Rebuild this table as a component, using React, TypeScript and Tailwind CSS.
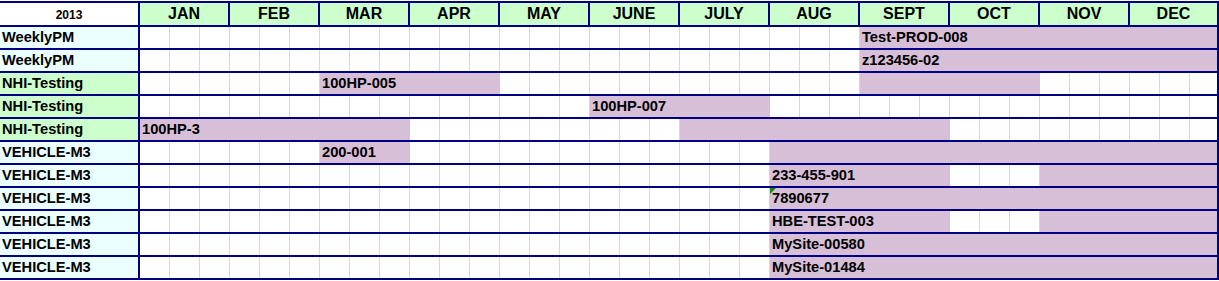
import React from "react";

type Bar = { start: number; end: number; text?: string };
type Row = { label: string; tone: "cyan" | "green"; bars: Bar[]; flag?: boolean };

const months = ["JAN", "FEB", "MAR", "APR", "MAY", "JUNE", "JULY", "AUG", "SEPT", "OCT", "NOV", "DEC"];

// bar start/end are third-of-month cell indexes (0..36)
const rows: Row[] = [
	{ label: "WeeklyPM", tone: "cyan", bars: [{ start: 24, end: 36, text: "Test-PROD-008" }] },
	{ label: "WeeklyPM", tone: "cyan", bars: [{ start: 24, end: 36, text: "z123456-02" }] },
	{ label: "NHI-Testing", tone: "green", bars: [{ start: 6, end: 12, text: "100HP-005" }, { start: 24, end: 30 }] },
	{ label: "NHI-Testing", tone: "cyan", bars: [{ start: 15, end: 21, text: "100HP-007" }] },
	{ label: "NHI-Testing", tone: "green", bars: [{ start: 0, end: 9, text: "100HP-3" }, { start: 18, end: 27 }] },
	{ label: "VEHICLE-M3", tone: "cyan", bars: [{ start: 6, end: 9, text: "200-001" }, { start: 21, end: 36 }] },
	{ label: "VEHICLE-M3", tone: "cyan", bars: [{ start: 21, end: 27, text: "233-455-901" }, { start: 30, end: 36 }] },
	{ label: "VEHICLE-M3", tone: "cyan", bars: [{ start: 21, end: 36, text: "7890677" }], flag: true },
	{ label: "VEHICLE-M3", tone: "cyan", bars: [{ start: 21, end: 27, text: "HBE-TEST-003" }, { start: 30, end: 36 }] },
	{ label: "VEHICLE-M3", tone: "cyan", bars: [{ start: 21, end: 36, text: "MySite-00580" }] },
	{ label: "VEHICLE-M3", tone: "cyan", bars: [{ start: 21, end: 36, text: "MySite-01484" }] },
];

// the 4th row label is green in the sheet too
rows[3].tone = "green";

function Cells({ row }: { row: Row }) {
	const cells = [];
	for (let i = 0; i < 36; i++) {
		const bar = row.bars.find((b) => i >= b.start && i < b.end);
		const first = bar && bar.start === i;
		cells.push(
			<div
				key={i}
				className={
					bar
						? "relative w-[30px] shrink-0 h-full bg-[#d8bfd8]"
						: "relative w-[30px] shrink-0 h-full bg-white border-r border-[#d0d7e5]"
				}
			>
				{first && row.flag && (
					<span className="absolute top-0 left-0 w-0 h-0 border-t-[6px] border-r-[6px] border-t-[#168a16] border-r-transparent z-20" />
				)}
				{first && bar?.text && (
					<span className="relative z-10 block pl-[2px] whitespace-nowrap leading-[21px]">{bar.text}</span>
				)}
			</div>
		);
	}
	return <div className="flex flex-1 overflow-hidden h-full">{cells}</div>;
}

export default function App() {
	return (
		<div
			className="w-[1219px] h-[281px] bg-white pt-px overflow-hidden text-black font-bold"
			style={{ fontFamily: '"Liberation Sans", Arial, sans-serif' }}
		>
			<div className="border-t-2 border-r-2 border-[#000080]">
				{/* header */}
				<div className="flex h-[24px] border-b-2 border-[#000080]">
					<div className="w-[140px] shrink-0 border-r-2 border-[#000080] bg-white text-[12px] leading-[22px] text-center pt-px">
						2013
					</div>
					<div className="flex flex-1 overflow-hidden bg-[#ccffcc]">
						{months.map((m, i) => (
							<div
								key={m}
								className={
									i < 11
										? "w-[90px] shrink-0 border-r-2 border-[#000080] text-[16px] leading-[22px] text-center"
										: "flex-1 text-[16px] leading-[22px] text-center"
								}
							>
								{m}
							</div>
						))}
					</div>
				</div>
				{/* rows */}
				{rows.map((row, idx) => (
					<div key={idx} className="flex h-[23px] border-b-2 border-[#000080] text-[14.67px]">
						<div
							className={
								row.tone === "green"
									? "w-[140px] shrink-0 border-r-2 border-[#000080] bg-[#ccffcc] pl-[2px] leading-[21px] whitespace-nowrap"
									: "w-[140px] shrink-0 border-r-2 border-[#000080] bg-[#ebffff] pl-[2px] leading-[21px] whitespace-nowrap"
							}
						>
							{row.label}
						</div>
						<Cells row={row} />
					</div>
				))}
			</div>
		</div>
	);
}
